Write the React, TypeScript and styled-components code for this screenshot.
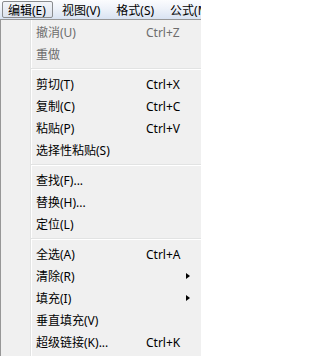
import React from 'react';
import styled, { createGlobalStyle } from 'styled-components';

const GlobalStyle = createGlobalStyle`
  html, body {
    margin: 0;
    padding: 0;
    background: #ffffff;
    overflow: hidden;
  }
  body {
    font-family: "Segoe UI", "Noto Sans", "Noto Sans CJK SC", sans-serif;
    font-size: 12px;
    color: #000;
  }
`;

const Screen = styled.div`
  width: 201px;
  height: 356px;
  overflow: hidden;
  display: flex;
  flex-direction: column;
`;

const MenuBar = styled.div`
  height: 19px;
  flex: none;
  display: flex;
  align-items: stretch;
  padding-left: 2px;
  background: linear-gradient(to bottom, #fbfcfe 0%, #eef2f9 45%, #d9e3f2 100%);
`;

const BarItem = styled.div<{ $open?: boolean }>`
  display: flex;
  align-items: center;
  padding: 0 6px 0 5px;
  margin: 1px 3px 0 0;
  height: 17px;
  box-sizing: border-box;
  white-space: nowrap;
  border: 1px solid ${(p) => (p.$open ? '#8a8c8f' : 'transparent')};
  border-radius: 2px;
  background: ${(p) => (p.$open ? 'linear-gradient(to bottom, #f2f4f8, #dde3ee)' : 'transparent')};
`;

const Dropdown = styled.div`
  width: 222px;
  flex: none;
  border: 1px solid #979797;
  background-color: #f0f0f0;
  background-image: linear-gradient(
    to right,
    transparent 29px,
    #e2e3e3 29px,
    #e2e3e3 30px,
    #ffffff 30px,
    #ffffff 31px,
    transparent 31px
  );
  padding: 1px 2px 3px 2px;
  box-sizing: border-box;
`;

const Item = styled.div<{ $disabled?: boolean }>`
  height: 22px;
  display: grid;
  grid-template-columns: 33px 110px 40px 14px;
  align-items: center;
  white-space: nowrap;
  color: ${(p) => (p.$disabled ? '#6d6d6d' : '#000')};
`;

const Label = styled.span`
  grid-column: 2;
`;

const Shortcut = styled.span`
  grid-column: 3;
`;

const SubArrow = styled.span`
  grid-column: 4;
  width: 0;
  height: 0;
  border-top: 3.5px solid transparent;
  border-bottom: 3.5px solid transparent;
  border-left: 4px solid #000;
  justify-self: start;
`;

const Separator = styled.div`
  height: 8px;
  display: flex;
  flex-direction: column;
  justify-content: center;
  margin-left: 28px;

  &::after {
    content: '';
    display: block;
    height: 1px;
    background: #e2e3e3;
    border-bottom: 1px solid #ffffff;
  }
`;

type Entry =
  | { sep: true }
  | { sep?: false; label: string; shortcut?: string; sub?: boolean; disabled?: boolean };

const entries: Entry[] = [
  { label: '撤消(U)', shortcut: 'Ctrl+Z', disabled: true },
  { label: '重做', disabled: true },
  { sep: true },
  { label: '剪切(T)', shortcut: 'Ctrl+X' },
  { label: '复制(C)', shortcut: 'Ctrl+C' },
  { label: '粘贴(P)', shortcut: 'Ctrl+V' },
  { label: '选择性粘贴(S)' },
  { sep: true },
  { label: '查找(F)...' },
  { label: '替换(H)...' },
  { label: '定位(L)' },
  { sep: true },
  { label: '全选(A)', shortcut: 'Ctrl+A' },
  { label: '清除(R)', sub: true },
  { label: '填充(I)', sub: true },
  { label: '垂直填充(V)' },
  { label: '超级链接(K)...', shortcut: 'Ctrl+K' },
];

export default function App() {
  return (
    <>
      <GlobalStyle />
      <Screen>
        <MenuBar>
          <BarItem $open>编辑(E)</BarItem>
          <BarItem>视图(V)</BarItem>
          <BarItem>格式(S)</BarItem>
          <BarItem>公式(M)</BarItem>
        </MenuBar>
        <Dropdown>
          {entries.map((e, i) =>
            e.sep ? (
              <Separator key={i} />
            ) : (
              <Item key={i} $disabled={e.disabled}>
                <Label>{e.label}</Label>
                {e.shortcut && <Shortcut>{e.shortcut}</Shortcut>}
                {e.sub && <SubArrow />}
              </Item>
            )
          )}
        </Dropdown>
      </Screen>
    </>
  );
}
